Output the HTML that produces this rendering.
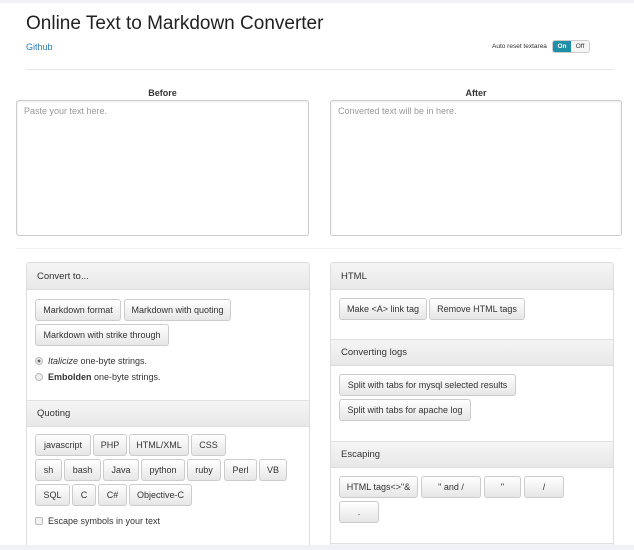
<!DOCTYPE html>
<html><head><meta charset="utf-8"><style>
*{box-sizing:border-box;margin:0;padding:0}
html,body{width:634px;height:550px;overflow:hidden}
body{background:#fff;font-family:"Liberation Sans",Arial,sans-serif;color:#333;position:relative;font-size:9px}
.a{position:absolute}
.btn{position:absolute;height:22px;border:1px solid #ccc;border-radius:3px;background:linear-gradient(#fff,#e6e6e6);font-size:9px;color:#333;display:flex;align-items:center;justify-content:center;white-space:nowrap}
.panel{position:absolute;border:1px solid #ddd;border-radius:3px;background:#fff;overflow:hidden}
.hd{position:absolute;left:0;right:0;height:27px;background:linear-gradient(#f5f5f5,#e8e8e8);border-top:1px solid #e0e0e0;border-bottom:1px solid #ddd;font-size:9.5px;padding-left:10px;display:flex;align-items:center}
textarea{position:absolute;border:1px solid #ccc;border-radius:3px;resize:none;font-family:inherit;font-size:9px;padding:5px 7px;color:#999;box-shadow:inset 0 1px 2px rgba(0,0,0,.08)}
</style></head><body>
<div class="a" style="left:0;top:0;width:634px;height:3px;background:#eef2f6"></div>
<div class="a" style="left:26px;top:13px;font-size:19px;color:#222">Online Text to Markdown Converter</div>
<div class="a" style="left:26px;top:42px;font-size:9px;color:#2a7ab8">Github</div>
<div class="a" style="left:492px;top:43px;font-size:6.5px;color:#333">Auto reset textarea</div>
<div class="a" style="left:552px;top:40px;width:38px;height:13px;border:1px solid #ccc;border-radius:3px;overflow:hidden;display:flex;font-size:6.5px;font-weight:bold">
<div style="width:18px;background:#1f8fa6;color:#fff;display:flex;align-items:center;justify-content:center">On</div>
<div style="flex:1;background:#f5f5f5;color:#333;display:flex;align-items:center;justify-content:center;font-weight:normal">Off</div></div>
<div class="a" style="left:26px;top:69px;width:588px;height:1px;background:#e5e5e5"></div>
<div class="a" style="left:16px;top:88px;width:293px;text-align:center;font-weight:bold;font-size:9px">Before</div>
<div class="a" style="left:330px;top:88px;width:292px;text-align:center;font-weight:bold;font-size:9px">After</div>
<textarea style="left:16px;top:100px;width:293px;height:136px">Paste your text here.</textarea>
<textarea style="left:330px;top:100px;width:292px;height:136px">Converted text will be in here.</textarea>
<div class="a" style="left:16px;top:248px;width:606px;height:1px;background:#f0f0f0"></div>

<div class="panel" style="left:26px;top:262px;width:284px;height:300px">
<div class="hd" style="top:0;border-top:none">Convert to...</div>
<div class="hd" style="top:137px">Quoting</div>
</div>
<div class="btn" style="left:35px;top:299px;width:86px">Markdown format</div>
<div class="btn" style="left:124px;top:299px;width:107px">Markdown with quoting</div>
<div class="btn" style="left:35px;top:324px;width:134px">Markdown with strike through</div>
<div class="a" style="left:35px;top:357px;width:8px;height:8px;border-radius:50%;border:1px solid #bbb;background:radial-gradient(#666 30%,#eee 40%)"></div>
<div class="a" style="left:48px;top:356px;font-size:9px"><i>Italicize</i> one-byte strings.</div>
<div class="a" style="left:35px;top:373px;width:8px;height:8px;border-radius:50%;border:1px solid #bbb;background:#eee"></div>
<div class="a" style="left:48px;top:372px;font-size:9px"><b>Embolden</b> one-byte strings.</div>
<div class="btn" style="left:35px;top:434px;width:56px">javascript</div>
<div class="btn" style="left:93px;top:434px;width:34px">PHP</div>
<div class="btn" style="left:129px;top:434px;width:60px">HTML/XML</div>
<div class="btn" style="left:191px;top:434px;width:35px">CSS</div>
<div class="btn" style="left:35px;top:459px;width:27px">sh</div>
<div class="btn" style="left:64px;top:459px;width:37px">bash</div>
<div class="btn" style="left:103px;top:459px;width:36px">Java</div>
<div class="btn" style="left:141px;top:459px;width:44px">python</div>
<div class="btn" style="left:187px;top:459px;width:34px">ruby</div>
<div class="btn" style="left:224px;top:459px;width:33px">Perl</div>
<div class="btn" style="left:259px;top:459px;width:28px">VB</div>
<div class="btn" style="left:35px;top:484px;width:35px">SQL</div>
<div class="btn" style="left:72px;top:484px;width:24px">C</div>
<div class="btn" style="left:98px;top:484px;width:29px">C#</div>
<div class="btn" style="left:129px;top:484px;width:63px">Objective-C</div>
<div class="a" style="left:35px;top:517px;width:8px;height:8px;border:1px solid #bbb;border-radius:2px;background:#f2f2f2"></div>
<div class="a" style="left:48px;top:516px;font-size:9px">Escape symbols in your text</div>

<div class="panel" style="left:330px;top:262px;width:284px;height:300px">
<div class="hd" style="top:0;border-top:none">HTML</div>
<div class="hd" style="top:76px">Converting logs</div>
<div class="hd" style="top:178px">Escaping</div>
<div class="hd" style="top:280px"></div>
</div>
<div class="btn" style="left:339px;top:298px;width:88px">Make &lt;A&gt; link tag</div>
<div class="btn" style="left:429px;top:298px;width:96px">Remove HTML tags</div>
<div class="btn" style="left:339px;top:374px;width:177px">Split with tabs for mysql selected results</div>
<div class="btn" style="left:339px;top:399px;width:132px">Split with tabs for apache log</div>
<div class="btn" style="left:339px;top:476px;width:79px">HTML tags&lt;&gt;"&amp;</div>
<div class="btn" style="left:421px;top:476px;width:60px">" and /</div>
<div class="btn" style="left:484px;top:476px;width:37px">"</div>
<div class="btn" style="left:524px;top:476px;width:40px">/</div>
<div class="btn" style="left:339px;top:501px;width:40px">.</div>
<div class="a" style="left:0;top:545px;width:634px;height:5px;background:#eef2f6;z-index:5"></div>
</body></html>
